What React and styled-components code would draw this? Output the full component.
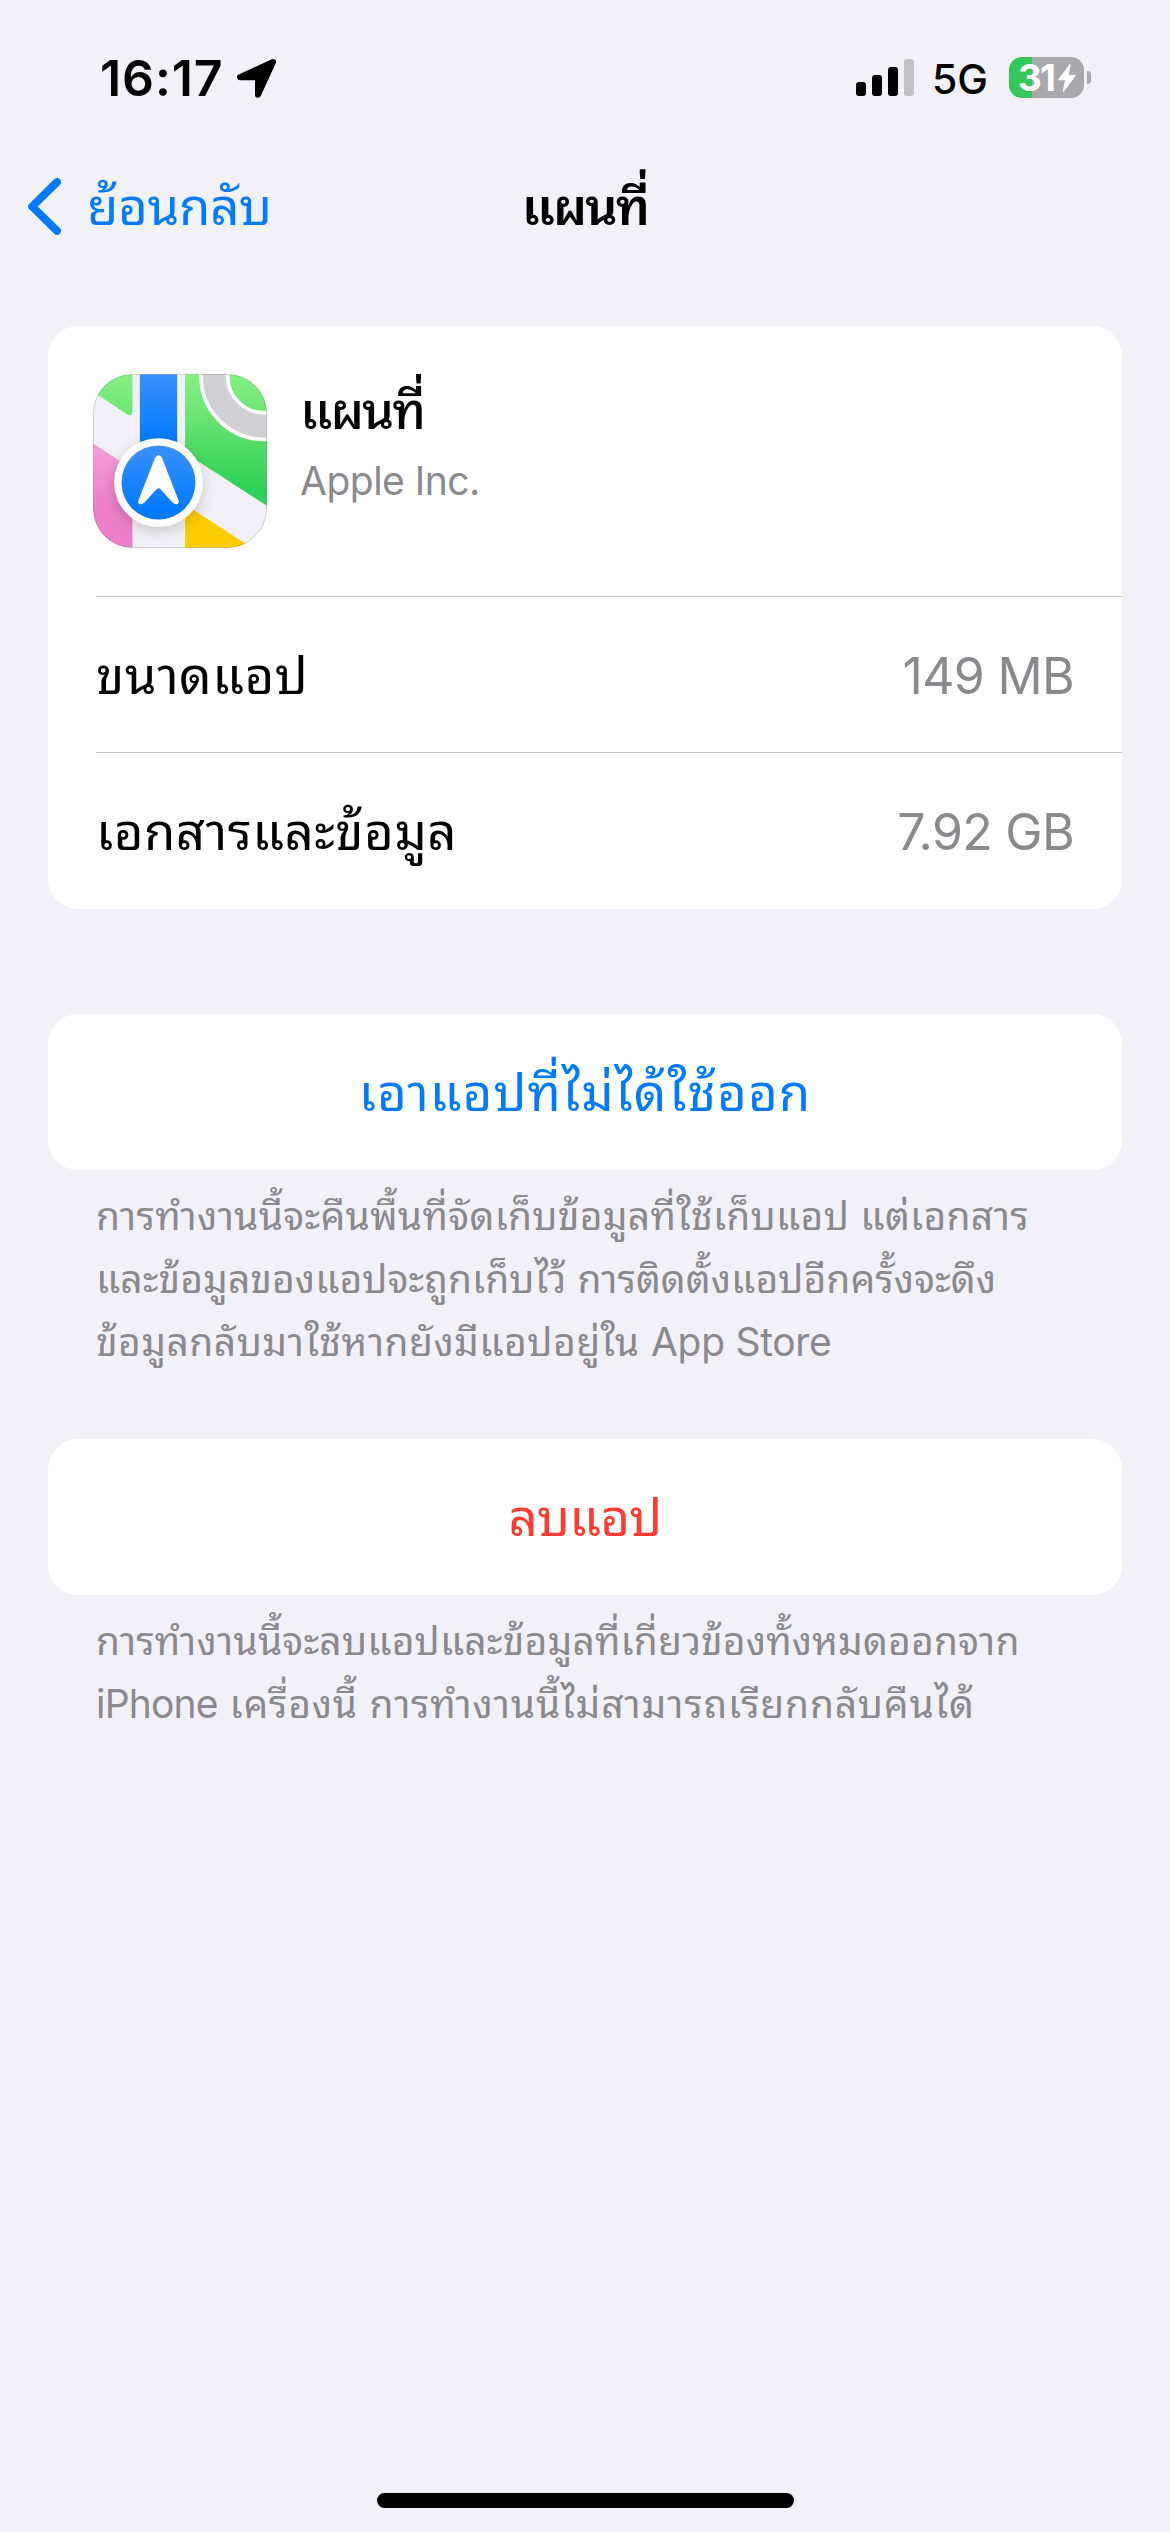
import React from "react";
import styled, { createGlobalStyle } from "styled-components";

const GlobalStyle = createGlobalStyle`
  * {
    box-sizing: border-box;
  }

  body {
    margin: 0;
    background: #f2f1f7;
    font-family: Inter, "Noto Sans Thai Looped", "Noto Sans Thai", "Noto Sans", sans-serif;
    color: #000;
  }

  svg {
    display: block;
    flex: none;
  }
`;

const Screen = styled.div`
  display: flex;
  flex-direction: column;
  width: 1170px;
  height: 2532px;
  background: #f2f1f7;
  overflow: hidden;
`;

const StatusBar = styled.header`
  display: flex;
  align-items: flex-start;
  height: 141px;
  padding: 48px 79px 0 100px;
`;

const StatusGroup = styled.div`
  display: flex;
  align-items: center;
  height: 60px;
`;

const Clock = styled.span`
  width: 137px;
  font-size: 50px;
  line-height: 60px;
  font-weight: 600;
  letter-spacing: 0.9px;
`;

const StatusIcons = styled(StatusGroup)`
  height: 59px;
  margin-left: auto;
`;

const Network = styled.span`
  width: 77px;
  margin-left: 18px;
  padding-top: 2px;
  font-size: 41px;
  line-height: 50px;
  font-weight: 500;
`;

const Battery = styled.div`
  display: flex;
  align-items: center;
  width: 75px;
  height: 41px;
  padding-left: 9px;
  border-radius: 13px;
  background: linear-gradient(90deg, #34c759 23px, #a9a8ad 23px);
  color: #fff;
`;

const BatteryLevel = styled.span`
  width: 40px;
  font-size: 37px;
  line-height: 41px;
  font-weight: 700;
  letter-spacing: -2px;
`;

const BatteryCap = styled.div`
  width: 4px;
  height: 13px;
  margin-left: 3px;
  border-radius: 0 4px 4px 0;
  background: #a9a8ad;
`;

const NavBar = styled.nav`
  display: grid;
  grid-template-columns: 1fr auto 1fr;
  align-items: start;
  height: 132px;
  padding: 35px 28px 0;
  font-size: 51px;
  line-height: 61px;
`;

const Back = styled.a`
  display: flex;
  align-items: center;
  gap: 26px;
  color: #007aff;
  letter-spacing: -0.3px;
`;

const Title = styled.h1`
  margin: 0;
  font-size: 51px;
  font-weight: 600;
  letter-spacing: -2px;
`;

const Content = styled.main`
  flex: 1;
  padding: 53px 48px 0;
`;

const Card = styled.section`
  border-radius: 30px;
  background: #fff;
  overflow: hidden;
`;

const AppHeader = styled.div`
  display: flex;
  height: 270px;
  padding: 48px 45px 0;
  gap: 33px;
`;

const AppInfo = styled.div`
  padding-top: 6px;
`;

const AppName = styled.div`
  font-size: 51px;
  line-height: 61px;
  font-weight: 500;
  letter-spacing: -2px;
`;

const Vendor = styled.div`
  margin-top: 16px;
  font-size: 39px;
  line-height: 47px;
  letter-spacing: -0.5px;
  color: #8a898e;
`;

const Row = styled.div`
  display: flex;
  align-items: baseline;
  justify-content: space-between;
  height: 156px;
  margin-left: 48px;
  padding-right: 48px;
  border-top: 1px solid #c6c6c8;
  font-size: 51px;
  line-height: 157px;
  letter-spacing: 0.5px;

  &:last-child {
    height: 157px;
  }
`;

const Value = styled.span`
  font-size: 50px;
  letter-spacing: -0.7px;
  color: #8a898e;
`;

const Action = styled.button`
  display: flex;
  justify-content: center;
  align-items: flex-start;
  width: 100%;
  height: 156px;
  margin-top: ${props => props.$top}px;
  padding: 0;
  border: 0;
  border-radius: 30px;
  background: #fff;
  color: ${props => props.$color};
  font-family: inherit;
  font-size: 51px;
  line-height: 157px;
  letter-spacing: ${props => props.$spacing}px;
`;

const Note = styled.p`
  margin: 14px 48px 0;
  font-size: 39px;
  line-height: 63px;
  color: #8a898e;
  white-space: nowrap;
`;

const Line = styled.span`
  display: block;
  letter-spacing: ${props => props.$spacing}px;
`;

const Latin = styled.span`
  letter-spacing: ${props => props.$spacing}px;
`;

const HomeIndicator = styled.div`
  width: 417px;
  height: 15px;
  margin: 0 auto 24px;
  border-radius: 8px;
  background: #000;
`;

const LocationIcon = () => (
    <svg width="39" height="39" viewBox="711 87 117 117">
        <path
            d="M819 96 720 141.500 774 142V194.500Z"
            stroke="#000"
            strokeWidth="18"
            strokeLinejoin="round"
        />
    </svg>
);

const SignalIcon = () => (
    <svg width="58" height="37" viewBox="0 0 58 37">
        <rect x="0" y="23" width="10" height="14" rx="3" />
        <rect x="16" y="16" width="10" height="21" rx="3" />
        <rect x="32" y="8" width="10" height="29" rx="3" />
        <rect x="48" y="0" width="10" height="37" rx="3" fill="#c1c0c5" />
    </svg>
);

const BoltIcon = () => (
    <svg width="18" height="28" viewBox="0 0 54 84">
        <path
            d="M36 3 3 47H24L16 81 51 35H30Z"
            fill="#fff"
            stroke="#fff"
            strokeWidth="4"
            strokeLinejoin="round"
        />
    </svg>
);

const ChevronIcon = () => (
    <svg width="33" height="57" viewBox="0 0 99 171">
        <path
            d="M87 12.500 12.500 85.500 87 158.500"
            fill="none"
            stroke="#007aff"
            strokeWidth="24"
            strokeLinecap="round"
            strokeLinejoin="round"
        />
    </svg>
);

const MapsIcon = () => (
    <svg width="174" height="174" viewBox="69.500 71.500 522 522">
        <defs>
            <clipPath id="tile">
                <rect x="70" y="72" width="521" height="521" rx="118" />
            </clipPath>
            <linearGradient id="green" gradientUnits="userSpaceOnUse" x1="0" y1="72" x2="0" y2="410">
                <stop offset="0" stopColor="#86f083" />
                <stop offset="0.350" stopColor="#6de574" />
                <stop offset="1" stopColor="#30d158" />
            </linearGradient>
            <linearGradient id="road" x1="0" y1="0" x2="0" y2="1">
                <stop offset="0" stopColor="#3a91fb" />
                <stop offset="0.900" stopColor="#007aff" />
            </linearGradient>
            <linearGradient id="pink" x1="0" y1="0" x2="0" y2="1">
                <stop offset="0" stopColor="#f29fd8" />
                <stop offset="0.600" stopColor="#ee7fc8" />
            </linearGradient>
            <filter id="shadow" x="-40%" y="-40%" width="180%" height="180%">
                <feDropShadow dx="0" dy="12" stdDeviation="20" floodColor="#000" floodOpacity="0.180" />
            </filter>
        </defs>
        <g clipPath="url(#tile)">
            <rect x="70" y="72" width="521" height="521" fill="#f1f0f6" />
            <path d="M70 72H189V184Q188 198 174 194L70 125Z" fill="url(#green)" />
            <path d="M345 72H591V467L345 308Z" fill="url(#green)" />
            <circle cx="583" cy="78" r="149.500" fill="none" stroke="#fff" strokeWidth="91" />
            <circle cx="583" cy="78" r="149.500" fill="none" stroke="#d1d0d5" strokeWidth="69" />
            <path d="M70 280 189 358V593H70Z" fill="url(#pink)" />
            <path d="M345 462 546 593H345Z" fill="#fc0" />
            <path d="M189 72V593M344 72V593" stroke="#fff" strokeWidth="3" opacity="0.600" />
            <rect x="207" y="72" width="118" height="230" fill="#fff" opacity="0.700" />
            <rect x="210" y="72" width="112" height="230" fill="url(#road)" />
            <circle cx="266" cy="397" r="133" fill="#fff" filter="url(#shadow)" />
            <circle cx="266" cy="397" r="111" fill="url(#road)" />
            <path
                d="M256 322Q266 308 276 322L326 450Q330 461 319 462 314 462 309 458L272 417Q266 411 260 417L223 458Q218 462 213 462 202 461 206 450Z"
                fill="#fff"
            />
        </g>
        <rect x="71" y="73" width="519" height="519" rx="117" fill="none" stroke="#000" strokeOpacity="0.150" strokeWidth="3" />
    </svg>
);

const App = () => {
    return (
        <Screen>
            <GlobalStyle />
            <StatusBar>
                <StatusGroup>
                    <Clock>16:17</Clock>
                    <LocationIcon />
                </StatusGroup>
                <StatusIcons>
                    <SignalIcon />
                    <Network>5G</Network>
                    <Battery>
                        <BatteryLevel>31</BatteryLevel>
                        <BoltIcon />
                    </Battery>
                    <BatteryCap />
                </StatusIcons>
            </StatusBar>
            <NavBar>
                <Back>
                    <ChevronIcon />
                    <span>ย้อนกลับ</span>
                </Back>
                <Title>แผนที่</Title>
            </NavBar>
            <Content>
                <Card>
                    <AppHeader>
                        <MapsIcon />
                        <AppInfo>
                            <AppName>แผนที่</AppName>
                            <Vendor>Apple Inc.</Vendor>
                        </AppInfo>
                    </AppHeader>
                    <Row>
                        <span>ขนาดแอป</span>
                        <Value>149 MB</Value>
                    </Row>
                    <Row>
                        <span>เอกสารและข้อมูล</span>
                        <Value>7.92 GB</Value>
                    </Row>
                </Card>
                <Action $color="#007aff" $top={105} $spacing={1.1}>เอาแอปที่ไม่ได้ใช้ออก</Action>
                <Note>
                    <Line $spacing={0.27}>การทำงานนี้จะคืนพื้นที่จัดเก็บข้อมูลที่ใช้เก็บแอป แต่เอกสาร</Line>
                    <Line $spacing={0.05}>และข้อมูลของแอปจะถูกเก็บไว้ การติดตั้งแอปอีกครั้งจะดึง</Line>
                    <Line $spacing={0.45}>
                        ข้อมูลกลับมาใช้หากยังมีแอปอยู่ใน <Latin $spacing={-0.3}>App Store</Latin>
                    </Line>
                </Note>
                <Action $color="#ff3b30" $top={66} $spacing={-0.7}>ลบแอป</Action>
                <Note>
                    <Line $spacing={0.15}>การทำงานนี้จะลบแอปและข้อมูลที่เกี่ยวข้องทั้งหมดออกจาก</Line>
                    <Line $spacing={0.78}>
                        <Latin $spacing={-0.8}>iPhone</Latin> เครื่องนี้ การทำงานนี้ไม่สามารถเรียกกลับคืนได้
                    </Line>
                </Note>
            </Content>
            <HomeIndicator />
        </Screen>
    );
};

export default App;
